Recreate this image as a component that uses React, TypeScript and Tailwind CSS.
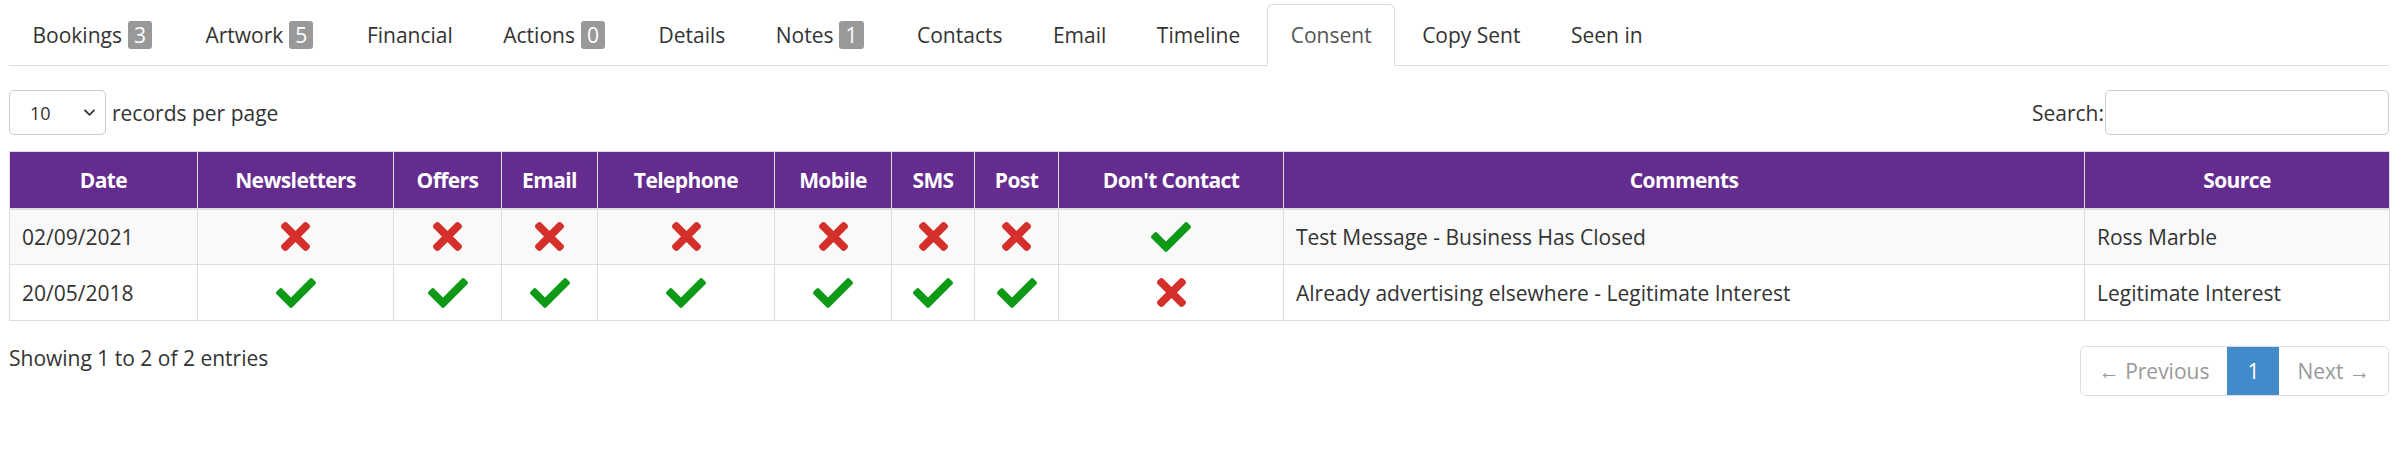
import React from "react";

const Cross = () => (
  <svg width="29" height="29" viewBox="0 80 352 352" className="inline-block align-middle">
    <path
      fill="#d42f2a"
      d="M242.72 256l100.07-100.07c12.28-12.28 12.28-32.19 0-44.48l-22.24-22.24c-12.28-12.28-32.19-12.28-44.48 0L176 189.28 75.93 89.21c-12.28-12.28-32.19-12.28-44.48 0L9.21 111.45c-12.280 12.28-12.28 32.19 0 44.48L109.28 256 9.21 356.07c-12.28 12.28-12.28 32.19 0 44.48l22.24 22.24c12.28 12.28 32.2 12.28 44.48 0L176 322.72l100.07 100.07c12.28 12.28 32.2 12.28 44.48 0l22.24-22.24c12.28-12.28 12.28-32.19 0-44.48L242.72 256z"
    />
  </svg>
);

const Check = () => (
  <svg width="40" height="30" viewBox="0 65 512 382" className="inline-block align-middle">
    <path
      fill="#0e9a16"
      d="M173.898 439.404l-166.4-166.4c-9.997-9.997-9.997-26.206 0-36.204l36.203-36.204c9.997-9.998 26.207-9.998 36.204 0L192 312.69 432.095 72.596c9.997-9.997 26.207-9.997 36.204 0l36.203 36.204c9.997 9.997 9.997 26.206 0 36.204l-294.4 294.401c-9.998 9.997-26.207 9.997-36.204-.001z"
    />
  </svg>
);

const tabs: { label: string; badge?: string; active?: boolean }[] = [
  { label: "Bookings", badge: "3" },
  { label: "Artwork", badge: "5" },
  { label: "Financial" },
  { label: "Actions", badge: "0" },
  { label: "Details" },
  { label: "Notes", badge: "1" },
  { label: "Contacts" },
  { label: "Email" },
  { label: "Timeline" },
  { label: "Consent", active: true },
  { label: "Copy Sent" },
  { label: "Seen in" },
];

const headers = [
  "Date",
  "Newsletters",
  "Offers",
  "Email",
  "Telephone",
  "Mobile",
  "SMS",
  "Post",
  "Don't Contact",
  "Comments",
  "Source",
];

type Row = { date: string; flags: boolean[]; comment: string; source: string; striped: boolean };

const rows: Row[] = [
  {
    date: "02/09/2021",
    flags: [false, false, false, false, false, false, false, true],
    comment: "Test Message - Business Has Closed",
    source: "Ross Marble",
    striped: true,
  },
  {
    date: "20/05/2018",
    flags: [true, true, true, true, true, true, true, false],
    comment: "Already advertising elsewhere - Legitimate Interest",
    source: "Legitimate Interest",
    striped: false,
  },
];

export default function App() {
  return (
    <div className="w-[2401px] min-h-[468px] bg-white font-['Open_Sans',sans-serif] text-[21px] leading-[30px] text-[#333] pl-[9px] pr-[12px]">
      {/* Tabs */}
      <ul className="flex pt-[4px] border-b border-[#ddd]">
        {tabs.map((t) => (
          <li key={t.label} className="-mb-px mr-[3.5px]">
            <a
              className={
                t.active
                  ? "flex items-center px-[22.5px] py-[15px] border border-[#ddd] border-b-transparent rounded-t-[6px] bg-white text-[#555]"
                  : "flex items-center px-[22.5px] py-[15px] border border-transparent rounded-t-[6px] text-[#333]"
              }
            >
              <span>{t.label}</span>
              {t.badge && (
                <span className="ml-[6px] mr-[3px] inline-block bg-[#999] text-white rounded-[3px] px-[6px] leading-[28px] text-[21px]">
                  {t.badge}
                </span>
              )}
            </a>
          </li>
        ))}
      </ul>

      {/* Length + search */}
      <div className="flex justify-between items-center mt-[24px] h-[45px]">
        <div className="flex items-center">
          <div className="flex items-center justify-between w-[97px] h-[45px] border border-[#ccc] rounded-[5px] pl-[20px] pr-[9px] text-[18px] text-[#333] bg-white">
            <span>10</span>
            <svg width="13" height="9" viewBox="0 0 13 9">
              <path d="M1.5 1.8 L6.5 6.8 L11.5 1.8" fill="none" stroke="#333" strokeWidth="1.8" />
            </svg>
          </div>
          <span className="ml-[6px]">records per page</span>
        </div>
        <div className="flex items-center">
          <span>Search:</span>
          <div className="ml-[1px] w-[284px] h-[45px] border border-[#ccc] rounded-[5px] bg-white" />
        </div>
      </div>

      {/* Table */}
      <table className="mt-[16px] w-[2380px] table-fixed border-collapse border border-[#ddd]">
        <colgroup>
          <col className="w-[188px]" />
          <col className="w-[196px]" />
          <col className="w-[108px]" />
          <col className="w-[96px]" />
          <col className="w-[177px]" />
          <col className="w-[117px]" />
          <col className="w-[83px]" />
          <col className="w-[84px]" />
          <col className="w-[225px]" />
          <col className="w-[801px]" />
          <col className="w-[305px]" />
        </colgroup>
        <thead>
          <tr className="h-[57px]">
            {headers.map((h) => (
              <th
                key={h}
                className="bg-[#652c90] text-white font-bold tracking-[-0.6px] text-center border border-[#ddd] border-b-2 px-[12px] py-0 align-middle"
              >
                {h}
              </th>
            ))}
          </tr>
        </thead>
        <tbody>
          {rows.map((r) => (
            <tr key={r.date} className={r.striped ? "h-[56px] bg-[#f9f9f9]" : "h-[56px] bg-white"}>
              <td className="border border-[#ddd] px-[12px] align-middle">{r.date}</td>
              {r.flags.map((f, i) => (
                <td key={i} className="border border-[#ddd] px-[12px] align-middle text-center leading-none">
                  {f ? <Check /> : <Cross />}
                </td>
              ))}
              <td className="border border-[#ddd] px-[12px] align-middle">{r.comment}</td>
              <td className="border border-[#ddd] px-[12px] align-middle">{r.source}</td>
            </tr>
          ))}
        </tbody>
      </table>

      {/* Footer */}
      <div className="flex justify-between items-start mt-[10px]">
        <div className="pt-[12px]">Showing 1 to 2 of 2 entries</div>
        <div className="mt-[15px] flex border border-[#ddd] rounded-[6px] overflow-hidden">
          <span className="px-[18px] py-[9px] text-[#999] bg-white">← Previous</span>
          <span className="px-[18px] py-[9px] text-white bg-[#428bca] w-[52px] text-center">1</span>
          <span className="px-[18px] py-[9px] text-[#999] bg-white">Next →</span>
        </div>
      </div>
    </div>
  );
}
